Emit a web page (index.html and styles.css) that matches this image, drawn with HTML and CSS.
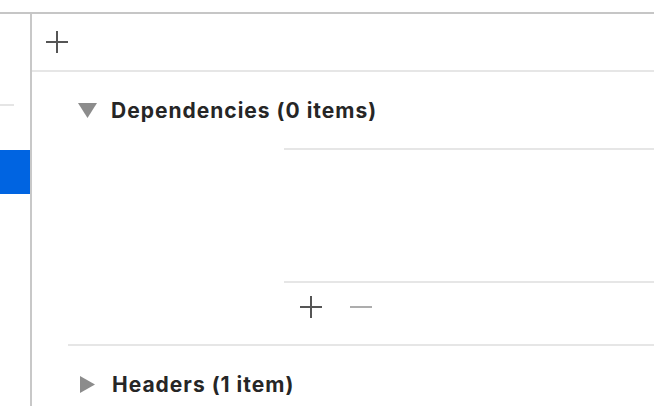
FILE: index.html
```html
<!DOCTYPE html>
<html>
<head>
<meta charset="utf-8">
<link rel="stylesheet" href="styles.css">
</head>
<body>
<div class="window">
  <div class="topspace"></div>
  <div class="topline"></div>
  <div class="main">
    <div class="sidebar">
      <div class="sb-line"></div>
      <div class="sb-selected"></div>
    </div>
    <div class="divider"></div>
    <div class="content">
      <div class="toolbar">
        <svg class="icon" width="22" height="22" viewBox="0 0 22 22"><path d="M11 0V22M0 11H22" stroke="#555" stroke-width="2" fill="none"/></svg>
      </div>
      <div class="sep"></div>
      <div class="section-head first">
        <svg class="disclosure down" width="19" height="15" viewBox="0 0 19 15"><path d="M0 0H19L9.5 15Z" fill="#8c8c8c"/></svg>
        <span class="title">Dependencies (0 items)</span>
      </div>
      <div class="table"></div>
      <div class="buttons">
        <svg class="icon" width="22" height="22" viewBox="0 0 22 22"><path d="M11 0V22M0 11H22" stroke="#555" stroke-width="2" fill="none"/></svg>
        <svg class="icon" width="22" height="22" viewBox="0 0 22 22"><path d="M0 11H22" stroke="#adadad" stroke-width="2" fill="none"/></svg>
      </div>
      <div class="sep indent"></div>
      <div class="section-head">
        <svg class="disclosure right" width="15" height="17" viewBox="0 0 15 17"><path d="M0 0L15 8.5L0 17Z" fill="#8c8c8c"/></svg>
        <span class="title">Headers (1 item)</span>
      </div>
    </div>
  </div>
</div>
</body>
</html>
```

FILE: styles.css
```css
html, body {
  margin: 0;
  padding: 0;
  background: #ffffff;
  height: 100%;
  overflow: hidden;
}
.window {
  display: flex;
  flex-direction: column;
  height: 406px;
  width: 654px;
  overflow: hidden;
}
.topspace {
  height: 12px;
  flex-shrink: 0;
}
.topline {
  height: 2px;
  background: #c6c6c6;
  flex-shrink: 0;
}
.main {
  flex: 1;
  display: flex;
  min-height: 0;
}
.sidebar {
  width: 30px;
  display: flex;
  flex-direction: column;
}
.sb-line {
  margin-top: 90px;
  width: 14px;
  height: 2px;
  background: #e5e5e5;
  flex-shrink: 0;
}
.sb-selected {
  margin-top: 44px;
  height: 44px;
  background: #0064e1;
  flex-shrink: 0;
}
.divider {
  width: 2px;
  background: #c8c8c8;
}
.content {
  flex: 1;
  display: flex;
  flex-direction: column;
  min-width: 0;
  overflow: hidden;
}
.content > * {
  flex-shrink: 0;
}
.toolbar {
  height: 56px;
  display: flex;
  align-items: center;
  padding-left: 14px;
}
.icon {
  display: block;
}
.sep {
  height: 2px;
  background: #e6e6e6;
}
.sep.indent {
  margin-left: 36px;
}
.section-head {
  height: 76px;
  display: flex;
  align-items: center;
  padding-left: 46px;
}
.section-head .disclosure.right {
  margin-left: 2px;
  margin-right: 17px;
}
.section-head .disclosure.down {
  margin-right: 14px;
}
.title {
  font-family: Inter, "Liberation Sans", Arial, sans-serif;
  font-weight: 700;
  font-size: 21px;
  letter-spacing: 1px;
  color: #262626;
}
.table {
  margin-left: 252px;
  height: 131px;
  border-top: 2px solid #e6e6e6;
  border-bottom: 2px solid #e6e6e6;
}
.buttons {
  height: 48px;
  padding-top: 13px;
  padding-left: 268px;
  display: flex;
  align-items: flex-start;
  gap: 28px;
}
```
